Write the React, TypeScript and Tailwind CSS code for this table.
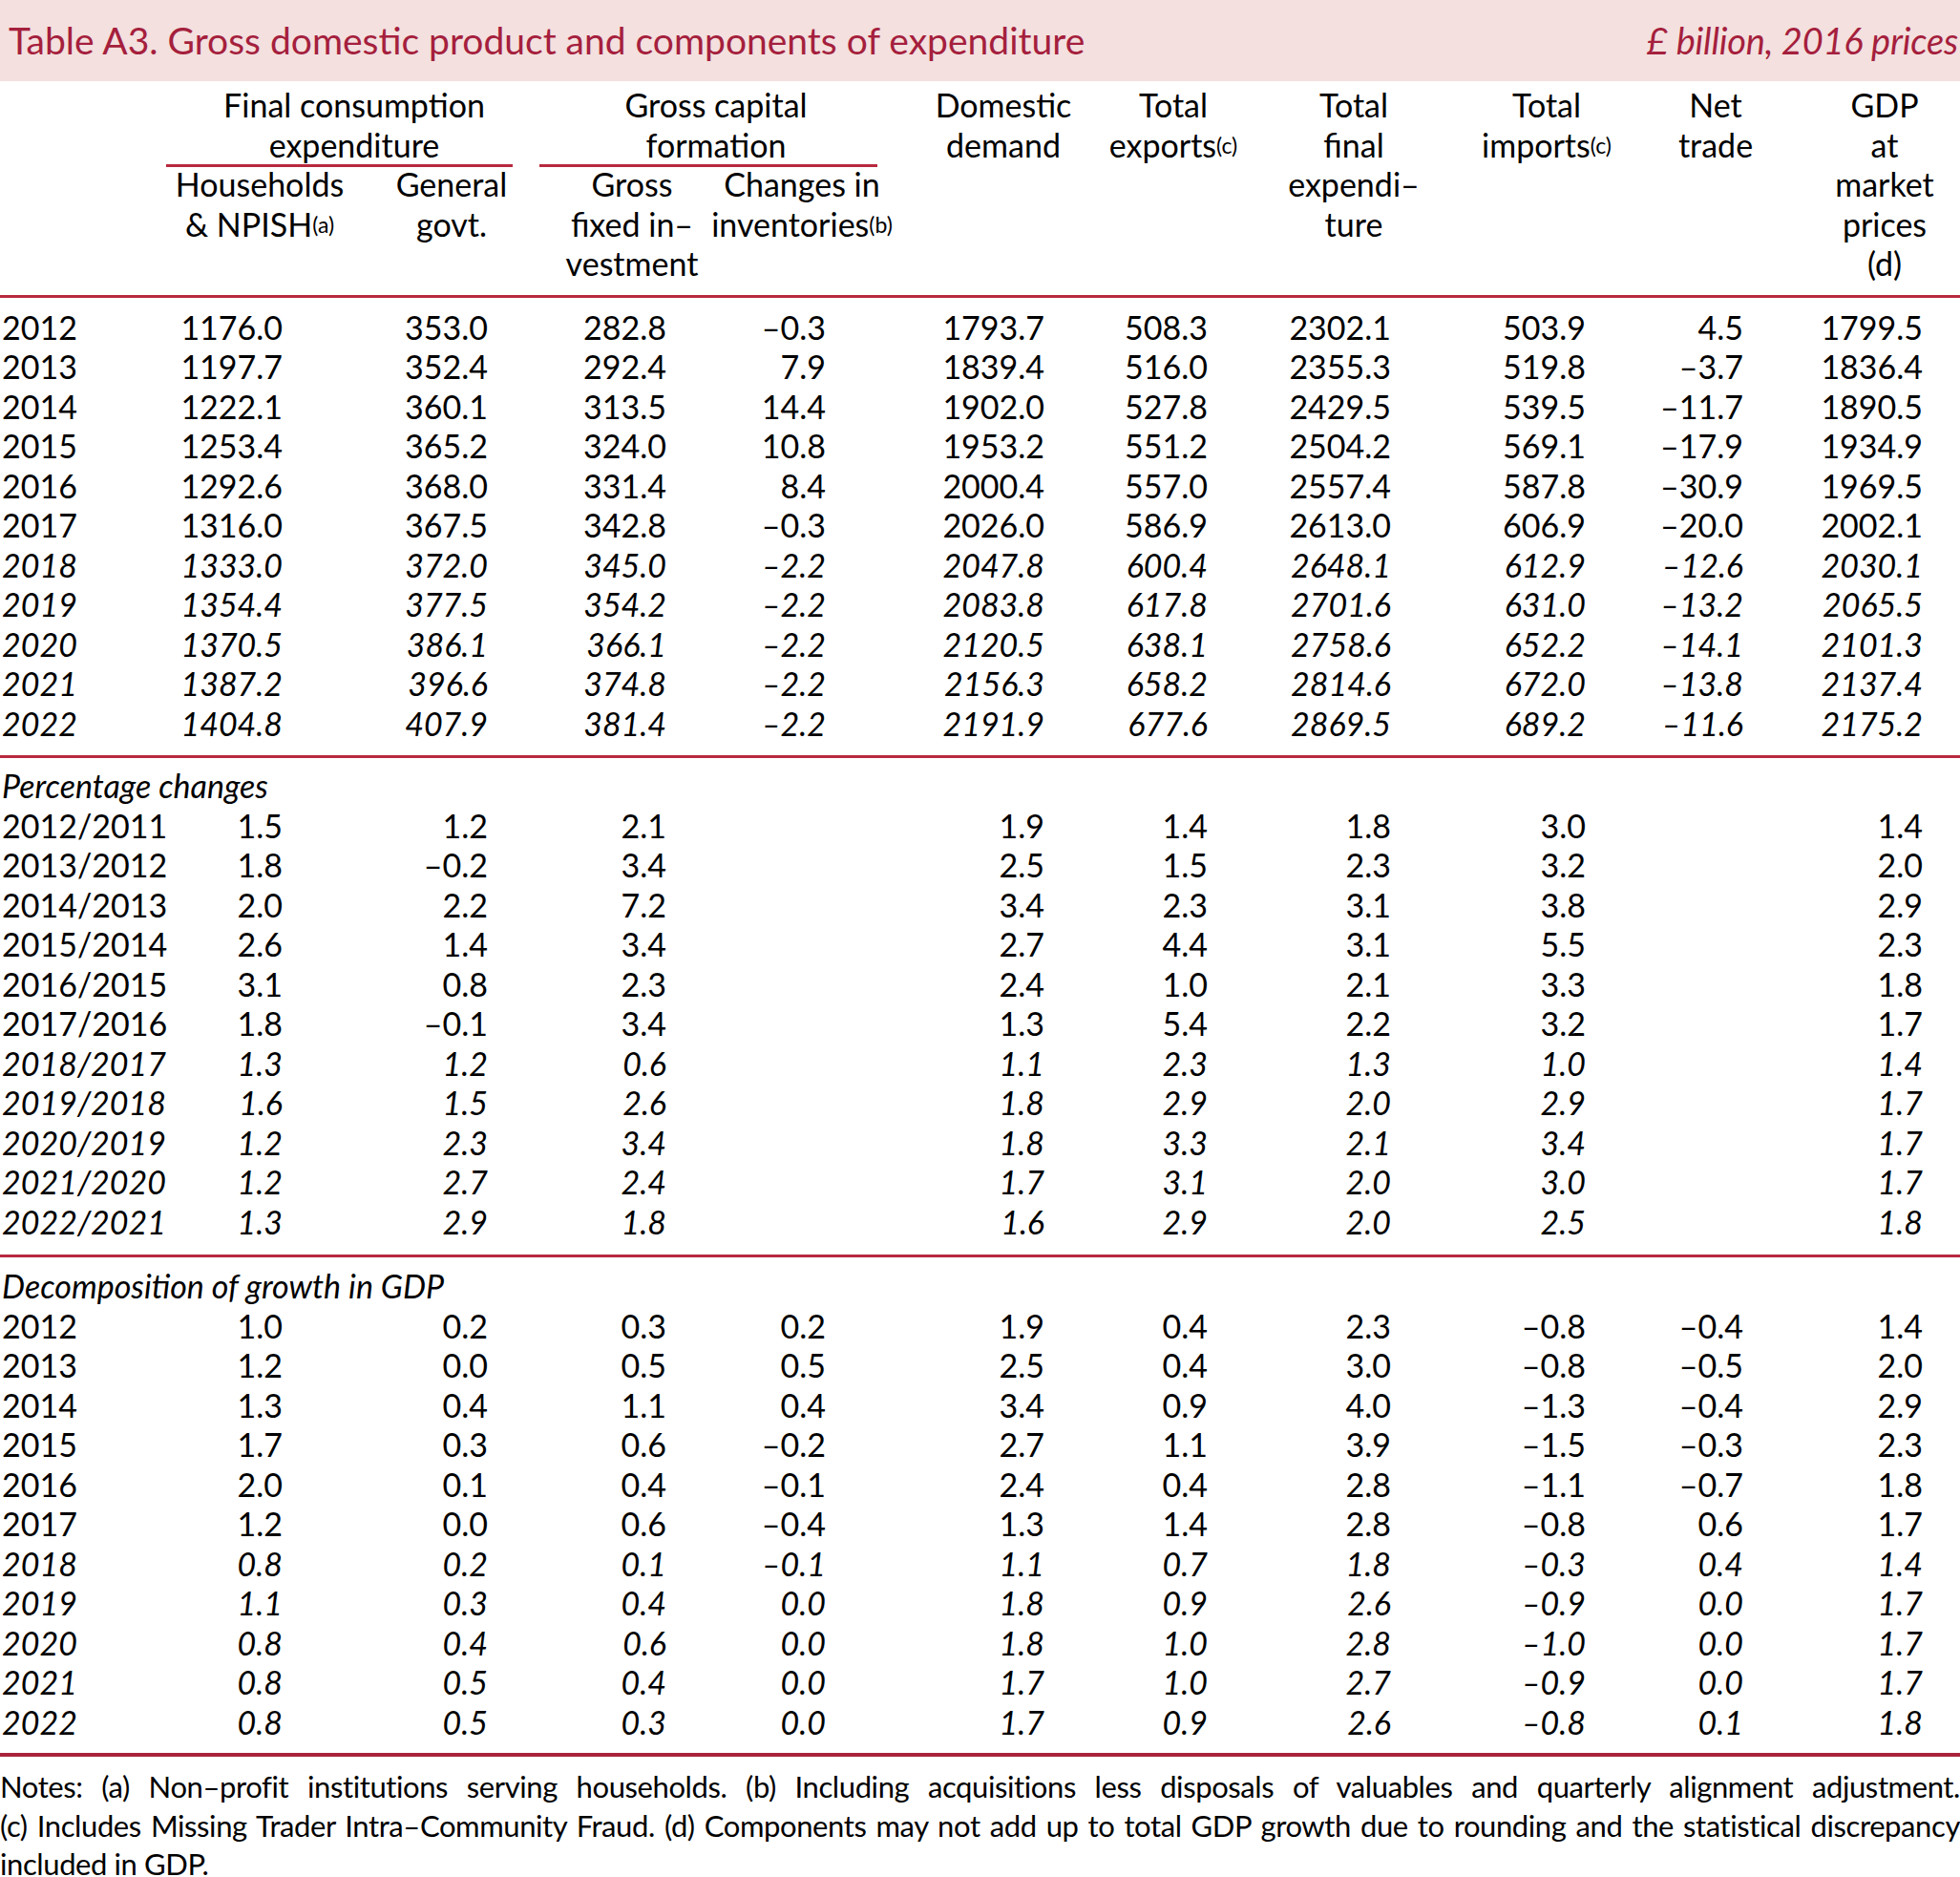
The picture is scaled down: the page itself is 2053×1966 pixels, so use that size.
import clsx from "clsx";

// Tabelle A3 — BIP und Verwendungskomponenten (Mrd. £, Preise 2016)
const GRID = "grid grid-cols-[170px_204px_198px_180px_176px_246px_110px_268px_136px_218px_136px_1fr]";
const PR = ["pr-[78px]", "pr-[61px]", "pr-[54px]", "pr-[63px]", "pr-[80px]", "pr-[19px]", "pr-[95px]", "pr-[27px]", "pr-[80px]", "pr-[28px]"];

type Row = [string, string[]];

const LEVELS: Row[] = [
  ["2012", ["1176.0", "353.0", "282.8", "–0.3", "1793.7", "508.3", "2302.1", "503.9", "4.5", "1799.5"]],
  ["2013", ["1197.7", "352.4", "292.4", "7.9", "1839.4", "516.0", "2355.3", "519.8", "–3.7", "1836.4"]],
  ["2014", ["1222.1", "360.1", "313.5", "14.4", "1902.0", "527.8", "2429.5", "539.5", "–11.7", "1890.5"]],
  ["2015", ["1253.4", "365.2", "324.0", "10.8", "1953.2", "551.2", "2504.2", "569.1", "–17.9", "1934.9"]],
  ["2016", ["1292.6", "368.0", "331.4", "8.4", "2000.4", "557.0", "2557.4", "587.8", "–30.9", "1969.5"]],
  ["2017", ["1316.0", "367.5", "342.8", "–0.3", "2026.0", "586.9", "2613.0", "606.9", "–20.0", "2002.1"]],
  ["2018", ["1333.0", "372.0", "345.0", "–2.2", "2047.8", "600.4", "2648.1", "612.9", "–12.6", "2030.1"]],
  ["2019", ["1354.4", "377.5", "354.2", "–2.2", "2083.8", "617.8", "2701.6", "631.0", "–13.2", "2065.5"]],
  ["2020", ["1370.5", "386.1", "366.1", "–2.2", "2120.5", "638.1", "2758.6", "652.2", "–14.1", "2101.3"]],
  ["2021", ["1387.2", "396.6", "374.8", "–2.2", "2156.3", "658.2", "2814.6", "672.0", "–13.8", "2137.4"]],
  ["2022", ["1404.8", "407.9", "381.4", "–2.2", "2191.9", "677.6", "2869.5", "689.2", "–11.6", "2175.2"]],
];

const CHANGES: Row[] = [
  ["2012/2011", ["1.5", "1.2", "2.1", "", "1.9", "1.4", "1.8", "3.0", "", "1.4"]],
  ["2013/2012", ["1.8", "–0.2", "3.4", "", "2.5", "1.5", "2.3", "3.2", "", "2.0"]],
  ["2014/2013", ["2.0", "2.2", "7.2", "", "3.4", "2.3", "3.1", "3.8", "", "2.9"]],
  ["2015/2014", ["2.6", "1.4", "3.4", "", "2.7", "4.4", "3.1", "5.5", "", "2.3"]],
  ["2016/2015", ["3.1", "0.8", "2.3", "", "2.4", "1.0", "2.1", "3.3", "", "1.8"]],
  ["2017/2016", ["1.8", "–0.1", "3.4", "", "1.3", "5.4", "2.2", "3.2", "", "1.7"]],
  ["2018/2017", ["1.3", "1.2", "0.6", "", "1.1", "2.3", "1.3", "1.0", "", "1.4"]],
  ["2019/2018", ["1.6", "1.5", "2.6", "", "1.8", "2.9", "2.0", "2.9", "", "1.7"]],
  ["2020/2019", ["1.2", "2.3", "3.4", "", "1.8", "3.3", "2.1", "3.4", "", "1.7"]],
  ["2021/2020", ["1.2", "2.7", "2.4", "", "1.7", "3.1", "2.0", "3.0", "", "1.7"]],
  ["2022/2021", ["1.3", "2.9", "1.8", "", "1.6", "2.9", "2.0", "2.5", "", "1.8"]],
];

const DECOMP: Row[] = [
  ["2012", ["1.0", "0.2", "0.3", "0.2", "1.9", "0.4", "2.3", "–0.8", "–0.4", "1.4"]],
  ["2013", ["1.2", "0.0", "0.5", "0.5", "2.5", "0.4", "3.0", "–0.8", "–0.5", "2.0"]],
  ["2014", ["1.3", "0.4", "1.1", "0.4", "3.4", "0.9", "4.0", "–1.3", "–0.4", "2.9"]],
  ["2015", ["1.7", "0.3", "0.6", "–0.2", "2.7", "1.1", "3.9", "–1.5", "–0.3", "2.3"]],
  ["2016", ["2.0", "0.1", "0.4", "–0.1", "2.4", "0.4", "2.8", "–1.1", "–0.7", "1.8"]],
  ["2017", ["1.2", "0.0", "0.6", "–0.4", "1.3", "1.4", "2.8", "–0.8", "0.6", "1.7"]],
  ["2018", ["0.8", "0.2", "0.1", "–0.1", "1.1", "0.7", "1.8", "–0.3", "0.4", "1.4"]],
  ["2019", ["1.1", "0.3", "0.4", "0.0", "1.8", "0.9", "2.6", "–0.9", "0.0", "1.7"]],
  ["2020", ["0.8", "0.4", "0.6", "0.0", "1.8", "1.0", "2.8", "–1.0", "0.0", "1.7"]],
  ["2021", ["0.8", "0.5", "0.4", "0.0", "1.7", "1.0", "2.7", "–0.9", "0.0", "1.7"]],
  ["2022", ["0.8", "0.5", "0.3", "0.0", "1.7", "0.9", "2.6", "–0.8", "0.1", "1.8"]],
];

function Sup({ children }: { children: string }) {
  return <span className="align-[4px] text-[23px] leading-none">{children}</span>;
}

function Lines({ lines }: { lines: React.ReactNode[] }) {
  return (
    <div className="flex shrink-0 flex-col items-center">
      {lines.map((l, i) => (
        <div key={i} className="whitespace-nowrap">{l}</div>
      ))}
    </div>
  );
}

function Rule({ thick }: { thick?: boolean }) {
  return <div className={clsx(thick ? "h-[4px] bg-[#a8233b]" : "h-[3px] bg-[#b8293f]")} />;
}

function DataRow({ label, cells, italic }: { label: string; cells: string[]; italic: boolean }) {
  return (
    <div className={clsx(GRID, "leading-[41.5px]", italic && "italic")}>
      <div className="whitespace-nowrap pl-[2px]">{label}</div>
      {cells.map((v, i) => (
        <div key={i} className={clsx("whitespace-nowrap text-right", PR[i])}>{v}</div>
      ))}
      <div />
    </div>
  );
}

function Section({ rows, title }: { rows: Row[]; title?: string }) {
  return (
    <div>
      {title && <div className="pl-[2px] italic leading-[41.5px]">{title}</div>}
      {rows.map(([label, cells], i) => (
        <DataRow key={label} label={label} cells={cells} italic={i >= 6} />
      ))}
    </div>
  );
}

function Header() {
  return (
    <div className={clsx(GRID, "grid-rows-[83px_auto] pb-[12px] pt-[4px] leading-[41.5px]")}>
      <div className="col-span-2 col-start-2 row-start-1 flex flex-col">
        <Lines lines={["Final consumption", "expenditure"]} />
        <div className="ml-[4px] mr-[35px] h-[3px] shrink-0 bg-[#b8293f]" />
      </div>
      <div className="col-span-2 col-start-4 row-start-1 flex flex-col">
        <Lines lines={["Gross capital", "formation"]} />
        <div className="ml-[-7px] mr-[9px] h-[3px] shrink-0 bg-[#b8293f]" />
      </div>

      <div className="col-start-2 row-start-2">
        <Lines lines={["Households", <>& NPISH<Sup>(a)</Sup></>]} />
      </div>
      <div className="col-start-3 row-start-2">
        <Lines lines={["General", "govt."]} />
      </div>
      <div className="col-start-4 row-start-2">
        <Lines lines={["Gross", "fixed in–", "vestment"]} />
      </div>
      <div className="col-start-5 row-start-2">
        <Lines lines={["Changes in", <>inventories<Sup>(b)</Sup></>]} />
      </div>

      <div className="col-start-6 row-span-2 row-start-1">
        <Lines lines={["Domestic", "demand"]} />
      </div>
      <div className="col-start-7 row-span-2 row-start-1">
        <Lines lines={["Total", <>exports<Sup>(c)</Sup></>]} />
      </div>
      <div className="col-start-8 row-span-2 row-start-1">
        <Lines lines={["Total", "final", "expendi–", "ture"]} />
      </div>
      <div className="col-start-9 row-span-2 row-start-1">
        <Lines lines={["Total", <>imports<Sup>(c)</Sup></>]} />
      </div>
      <div className="col-start-10 row-span-2 row-start-1">
        <Lines lines={["Net", "trade"]} />
      </div>
      <div className="col-start-11 row-span-2 row-start-1">
        <Lines lines={["GDP", "at", "market", "prices", "(d)"]} />
      </div>
    </div>
  );
}

export default function App() {
  return (
    <div className="min-h-screen w-full bg-white font-['Lato',sans-serif] text-[34px] text-black">
      <div className="flex h-[85px] items-center justify-between bg-[#f3e0df] pl-[9px] pr-[2px] text-[#a51f3d]">
        <div className="whitespace-nowrap text-[39px]">Table A3. Gross domestic product and components of expenditure</div>
        <div className="whitespace-nowrap text-[38px] italic tracking-[-0.2px]">£ billion, 2016 prices</div>
      </div>

      <Header />
      <Rule />

      <div className="mt-[10px]">
        <Section rows={LEVELS} />
      </div>
      <div className="mt-[13px]">
        <Rule />
      </div>

      <div className="mt-[8px]">
        <Section rows={CHANGES} title="Percentage changes" />
      </div>
      <div className="mt-[14px]">
        <Rule />
      </div>

      <div className="mt-[9px]">
        <Section rows={DECOMP} title="Decomposition of growth in GDP" />
      </div>
      <div className="mt-[12px]">
        <Rule thick />
      </div>

      <div className="mt-[11px] text-[31px] leading-[40.5px] tracking-[-0.4px]">
        <div className="text-justify [text-align-last:justify]">
          Notes: (a) Non–profit institutions serving households. (b) Including acquisitions less disposals of valuables and quarterly alignment adjustment.
        </div>
        <div className="text-justify [text-align-last:justify]">
          (c) Includes Missing Trader Intra–Community Fraud. (d) Components may not add up to total GDP growth due to rounding and the statistical discrepancy
        </div>
        <div>included in GDP.</div>
      </div>
    </div>
  );
}
